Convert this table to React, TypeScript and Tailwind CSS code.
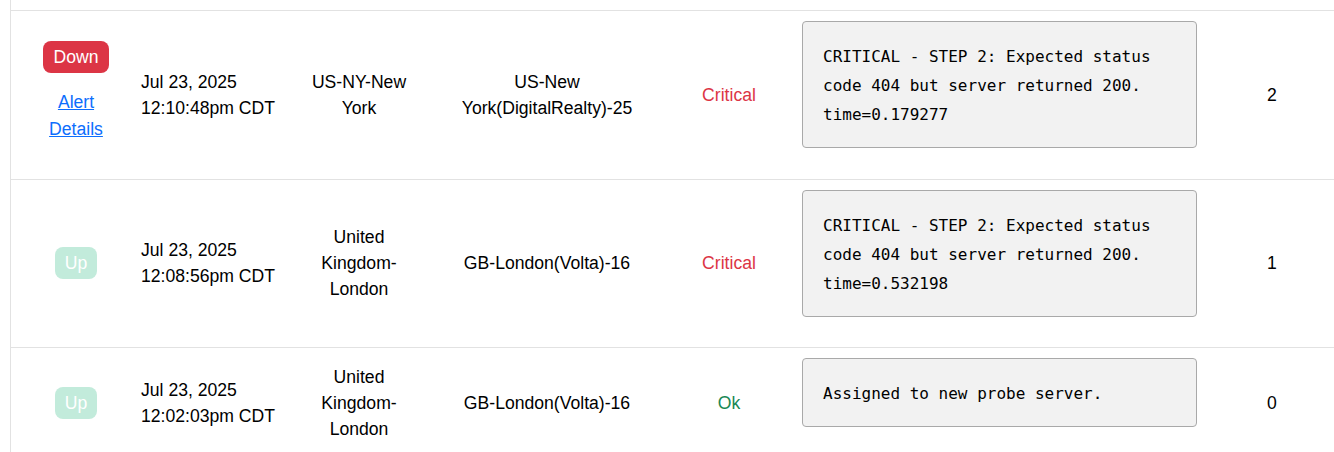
const rows = [
  {
    up: false,
    date: "Jul 23, 2025",
    time: "12:10:48pm CDT",
    location: "US-NY-New York",
    probe: "US-New York(DigitalRealty)-25",
    status: "Critical",
    message: "CRITICAL - STEP 2: Expected status code 404 but server returned 200. time=0.179277",
    count: 2,
  },
  {
    up: true,
    date: "Jul 23, 2025",
    time: "12:08:56pm CDT",
    location: "United Kingdom-London",
    probe: "GB-London(Volta)-16",
    status: "Critical",
    message: "CRITICAL - STEP 2: Expected status code 404 but server returned 200. time=0.532198",
    count: 1,
  },
  {
    up: true,
    date: "Jul 23, 2025",
    time: "12:02:03pm CDT",
    location: "United Kingdom-London",
    probe: "GB-London(Volta)-16",
    status: "Ok",
    message: "Assigned to new probe server.",
    count: 0,
  },
];

export default function App() {
  return (
    <div className="w-[1334px] h-[452px] overflow-hidden bg-white text-black font-['Liberation_Sans',Arial,sans-serif] text-[17.6px] leading-[26px]">
      <div className="ml-[10px] border-l border-[#e2e2e2]">
        <div className="h-[10px]" />
        {rows.map((row, i) => (
          <div key={i} className="flex border-t border-[#e2e2e2]">
            {/* state + link */}
            <div className="w-[130px] flex flex-col items-center justify-center">
              {row.up ? (
                <span className="h-[32px] px-[10px] flex items-center rounded-lg bg-[#c2ebdb] text-white">Up</span>
              ) : (
                <div className="flex flex-col items-center pb-[6px]">
                  <span className="h-[32px] px-[10.5px] flex items-center rounded-lg bg-[#dc3545] text-white">Down</span>
                  <a href="#" className="mt-[16px] w-[60px] text-center leading-[27px] text-[#0d6efd] underline">
                    Alert Details
                  </a>
                </div>
              )}
            </div>
            <div className="w-[149px] flex flex-col justify-center">
              <div>{row.date}</div>
              <div>{row.time}</div>
            </div>
            <div className="w-[138px] px-[19px] flex items-center justify-center text-center">
              {row.location}
            </div>
            <div className="w-[238px] px-[24px] flex items-center justify-center text-center">
              {row.probe}
            </div>
            <div
              className={`w-[126px] flex items-center justify-center ${
                row.status === "Ok" ? "text-[#198754]" : "text-[#dc3545]"
              }`}
            >
              {row.status}
            </div>
            <div className="w-[415px] px-[10px] pt-[10px] pb-[10px]">
              <pre className="mb-[20.5px] whitespace-pre-wrap bg-[#f2f2f2] border border-[#a9a9a9] rounded-[4px] px-[20px] pt-[20px] pb-[18px] font-['DejaVu_Sans_Mono',monospace] text-[16px] leading-[29px] text-black">
                {row.message}
              </pre>
            </div>
            <div className="flex-1 flex items-center justify-center pl-[3px]">{row.count}</div>
          </div>
        ))}
      </div>
    </div>
  );
}
